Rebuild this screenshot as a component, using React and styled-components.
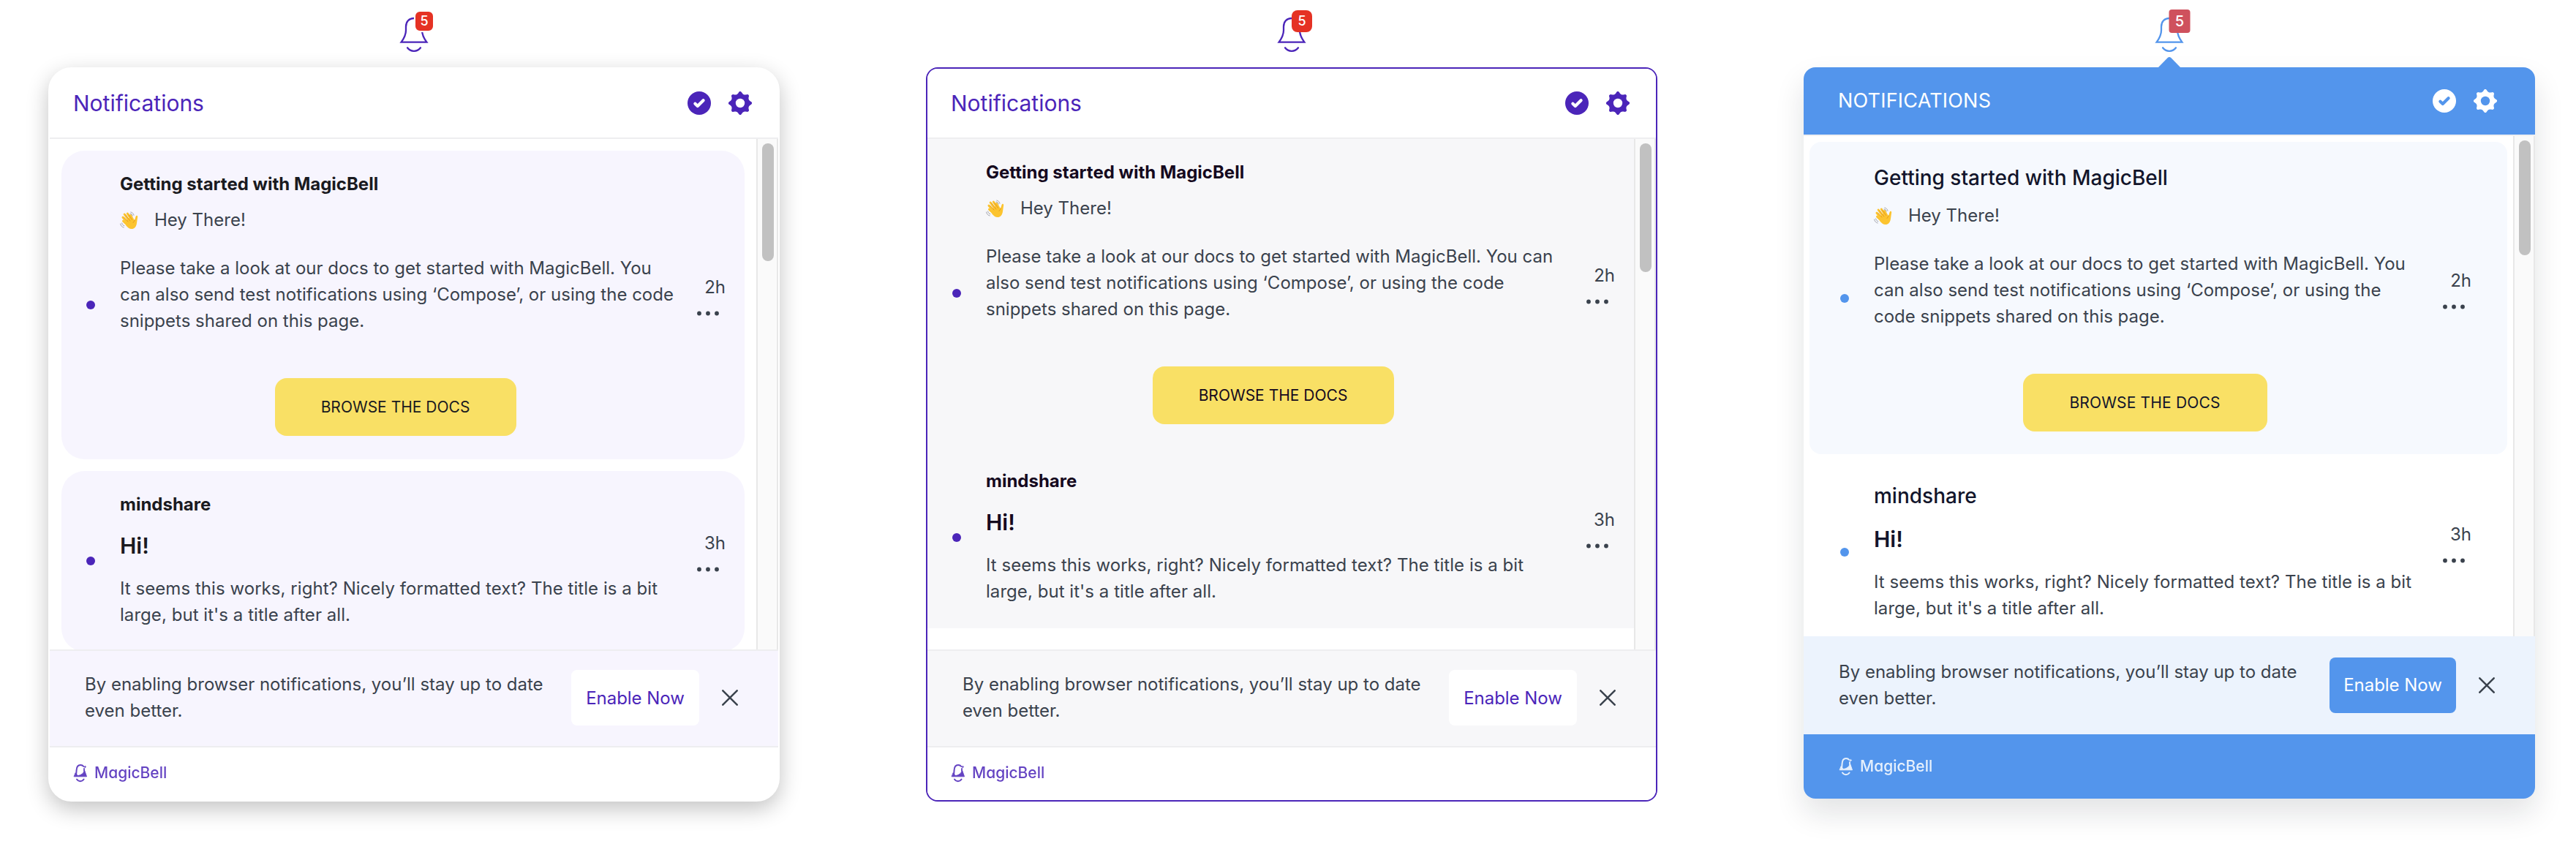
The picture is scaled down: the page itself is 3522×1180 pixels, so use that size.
import React from "react";
import styled, { createGlobalStyle, ThemeProvider, css } from "styled-components";

const GlobalStyle = createGlobalStyle`
  *, *::before, *::after { box-sizing: border-box; }
  body {
    margin: 0;
    background: #ffffff;
    font-family: Inter, "Liberation Sans", sans-serif;
  }
  h2, h3, h4, p { margin: 0; }
  button { font: inherit; border: 0; cursor: pointer; padding: 0; }
`;

const purple = "#4b25b9";
const blue = "#5395ec";

const base = {
  accent: purple,
  text: "#3a424d",
  heading: "#1a1a1f",
  line: "#eeeef0",
  badge: { width: 28, height: 30, radius: 8, font: 18, bg: "#e53224", ring: "0 solid #fff" },
  panel: { border: "2px solid #ffffff", radius: 32, shadow: "none", height: 1004 },
  header: {
    height: 96, bg: "#ffffff", color: purple, size: 30, spacing: "0",
    transform: "none", padding: "0 36px 0 32px",
  },
  list: { height: 698, thumb: 161, margin: 16, inset: 16 },
  card: { bg: "#f7f5fe", unreadBg: "#f7f5fe", radius: 32, padding: "28px 26px 32px 34px", aside: 70 },
  title: { size: 24, line: 36, weight: 700, spacing: "0", gap: 13, richGap: 20 },
  cta: { width: 330, spacing: "0", shift: 5 },
  banner: {
    height: 134, bg: "#f7f5fe", border: "#eeeef0", padding: "0 55px 2px 48px",
    buttonBg: "#ffffff", buttonColor: purple, buttonWidth: 175, gap: 31,
  },
  footer: { bg: "#ffffff", color: purple, padding: "0 32px 2px 32px", opacity: 0.86 },
};

const themes = [
  {
    ...base,
    badge: { ...base.badge, ring: "2px solid #fff" },
    panel: { ...base.panel, shadow: "0 10px 30px rgba(0, 0, 0, 0.24)" },
  },
  {
    ...base,
    heading: "#15091e",
    panel: { ...base.panel, border: `2px solid ${purple}`, radius: 16 },
    list: { height: 698, thumb: 176, margin: 0, inset: 0 },
    card: { ...base.card, bg: "#f7f7f9", unreadBg: "#f7f7f9", radius: 0 },
    banner: { ...base.banner, bg: "#f7f7f9" },
  },
  {
    ...base,
    accent: blue,
    heading: "#12152b",
    arrow: true,
    line: "#f0f0f1",
    badge: { width: 29, height: 32, radius: 4, font: 20, bg: "#cf515d", ring: "0 solid #fff" },
    panel: { border: "0", radius: 16, shadow: "0 20px 40px rgba(15, 25, 35, 0.12)", height: 1000 },
    header: {
      height: 94, bg: blue, color: "#ffffff", size: 27, spacing: "0.2px",
      transform: "uppercase", padding: "0 52px 0 47px",
    },
    list: { height: 684, thumb: 157, margin: 8, inset: 8 },
    card: { bg: "#ffffff", unreadBg: "#f6f9fe", radius: 16, padding: "28px 49px 31px 42px", aside: 74 },
    title: { size: 28, line: 42, weight: 500, spacing: "0", gap: 13, richGap: 20 },
    cta: { width: 334, spacing: "0.16px", shift: 2 },
    banner: {
      height: 134, bg: "#ecf3fd", border: "#ecf3fd", padding: "0 55px 1px 48px",
      buttonBg: blue, buttonColor: "#ffffff", buttonWidth: 173, gap: 31,
    },
    footer: { bg: blue, color: "#ffffff", padding: "0 48px 1px", opacity: 0.86 },
  },
];

const Page = styled.main`
  display: flex;
  align-items: flex-start;
  gap: 200px;
  width: 3522px;
  height: 1180px;
  padding: 0 66px 0;
  overflow: hidden;
`;

const Column = styled.section`
  width: 1000px;
  flex: none;
  color: ${(p) => p.theme.text};
`;

const BellArea = styled.div`
  position: relative;
  display: flex;
  justify-content: center;
  height: 92px;
  padding-top: 23px;
  color: ${(p) => p.theme.accent};
`;

const Badge = styled.span`
  position: absolute;
  left: 514px;
  top: 29px;
  width: ${(p) => p.theme.badge.width}px;
  height: ${(p) => p.theme.badge.height}px;
  transform: translate(-50%, -50%);
  display: flex;
  align-items: center;
  justify-content: center;
  border: ${(p) => p.theme.badge.ring};
  border-radius: ${(p) => p.theme.badge.radius}px;
  background: ${(p) => p.theme.badge.bg};
  color: #ffffff;
  font-size: ${(p) => p.theme.badge.font}px;
  font-weight: 500;
  line-height: 1;
`;

const Arrow = styled.svg`
  position: absolute;
  left: 484px;
  top: 77px;
`;

const Panel = styled.div`
  display: flex;
  flex-direction: column;
  height: ${(p) => p.theme.panel.height}px;
  border: ${(p) => p.theme.panel.border};
  border-radius: ${(p) => p.theme.panel.radius}px;
  box-shadow: ${(p) => p.theme.panel.shadow};
  background: #ffffff;
  overflow: hidden;
`;

const Header = styled.header`
  display: flex;
  align-items: center;
  flex: none;
  gap: 24px;
  height: ${(p) => p.theme.header.height}px;
  padding: ${(p) => p.theme.header.padding};
  border-bottom: 2px solid ${(p) => p.theme.line};
  background: ${(p) => p.theme.header.bg};
  background-clip: padding-box;
  color: ${(p) => p.theme.header.color};
`;

const HeaderTitle = styled.h2`
  flex: 1;
  font-size: ${(p) => p.theme.header.size}px;
  font-weight: 400;
  line-height: 40px;
  letter-spacing: ${(p) => p.theme.header.spacing};
  text-transform: ${(p) => p.theme.header.transform};
`;

const ListArea = styled.div`
  display: flex;
  flex: none;
  height: ${(p) => p.theme.list.height}px;
  overflow: hidden;
`;

const List = styled.div`
  display: flex;
  flex-direction: column;
  flex: 1;
  gap: ${(p) => p.theme.list.margin}px;
  padding: ${(p) => p.theme.list.inset}px;
`;

const Track = styled.div`
  width: 30px;
  padding: 6px;
  background: #fafafa;
  border: solid #e8e8e8;
  border-width: 0 2px;
`;

const Thumb = styled.div`
  width: 16px;
  height: ${(p) => p.theme.list.thumb}px;
  border-radius: 8px;
  background: #c1c1c1;
`;

const Card = styled.article`
  display: flex;
  align-items: center;
  flex: none;
  padding: ${(p) => p.theme.card.padding};
  border-radius: ${(p) => p.theme.card.radius}px;
  background: ${(p) => (p.$highlight ? p.theme.card.unreadBg : p.theme.card.bg)};
`;

const UnreadDot = styled.span`
  flex: none;
  width: 12px;
  height: 12px;
  margin: 3px 34px 0 0;
  border-radius: 50%;
  background: ${(p) => p.theme.accent};
`;

const Body = styled.div`
  flex: 1;
  display: flex;
  flex-direction: column;
`;

const Title = styled.h3`
  color: ${(p) => p.theme.heading};
  font-size: ${(p) => p.theme.title.size}px;
  font-weight: ${(p) => p.theme.title.weight};
  line-height: ${(p) => p.theme.title.line}px;
  margin-bottom: ${(p) => (p.$rich ? p.theme.title.richGap : p.theme.title.gap)}px;
`;

const Greeting = styled.p`
  display: flex;
  align-items: center;
  gap: 22px;
  margin-bottom: 30px;
  font-size: 24px;
  line-height: 36px;
`;

const Paragraph = styled.p`
  font-size: 24px;
  line-height: 36px;
  ${(p) => p.$wide && css`letter-spacing: 0.05px;`}
`;

const Lead = styled.h4`
  margin-bottom: 23px;
  color: ${(p) => p.theme.heading};
  font-size: 30px;
  font-weight: 600;
  line-height: 36px;
`;

const Cta = styled.button`
  align-self: center;
  width: ${(p) => p.theme.cta.width}px;
  height: 79px;
  margin: 60px ${(p) => p.theme.cta.shift}px 0 0;
  border-radius: 16px;
  background: #f9e065;
  color: ${(p) => p.theme.heading};
  font-size: 21px;
  letter-spacing: ${(p) => p.theme.cta.spacing};
`;

const Aside = styled.div`
  display: flex;
  flex-direction: column;
  align-items: flex-end;
  flex: none;
  width: ${(p) => p.theme.card.aside}px;
`;

const Time = styled.time`
  font-size: 24px;
  line-height: 36px;
`;

const More = styled.svg`
  margin: 14px 9px 24px 0;
`;

const Banner = styled.div`
  display: flex;
  align-items: center;
  flex: none;
  height: ${(p) => p.theme.banner.height}px;
  padding: ${(p) => p.theme.banner.padding};
  border: solid ${(p) => p.theme.banner.border};
  border-width: 2px 0;
  background: ${(p) => p.theme.banner.bg};
`;

const BannerText = styled.p`
  flex: 1;
  padding-right: 36px;
  font-size: 24px;
  line-height: 36px;
`;

const EnableButton = styled.button`
  width: ${(p) => p.theme.banner.buttonWidth}px;
  height: 76px;
  margin-right: ${(p) => p.theme.banner.gap}px;
  border-radius: 8px;
  background: ${(p) => p.theme.banner.buttonBg};
  color: ${(p) => p.theme.banner.buttonColor};
  font-size: 24px;
  letter-spacing: -0.05px;
`;

const Footer = styled.footer`
  display: flex;
  align-items: center;
  flex: 1;
  gap: 8px;
  padding: ${(p) => p.theme.footer.padding};
  background: ${(p) => p.theme.footer.bg};
  color: ${(p) => p.theme.footer.color};
`;

const Brand = styled.span`
  font-size: 21px;
  font-weight: 500;
  line-height: 28px;
  font-feature-settings: "cv11", "ss03";
  opacity: ${(p) => p.theme.footer.opacity};
`;

const BrandMark = styled.svg`
  opacity: ${(p) => p.theme.footer.opacity};
`;

function Bell() {
  return (
    <svg width="40" height="50" viewBox="0 0 40 50" fill="none" stroke="currentColor" strokeWidth="2.3" strokeLinecap="round">
      <path d="M20 2C13 2 9 7 9 13.500V18.500C9 25 6 30 2.600 34.700H37.400C34 30 31 25 31 18.500V13.500C31 7 27 2 20 2Z" />
      <path d="M11 42.300C15.500 48.300 24.500 48.300 29 42.300" />
    </svg>
  );
}

function CheckCircle() {
  return (
    <svg width="32" height="32" viewBox="-16 -16 32 32">
      <mask id="check-cut">
        <rect x="-16" y="-16" width="32" height="32" fill="#fff" />
        <path d="M-5.600 0.700L-2.200 4L5.600-3.800" fill="none" stroke="#000" strokeWidth="4.200" strokeLinecap="round" strokeLinejoin="round" />
      </mask>
      <circle r="16" fill="currentColor" mask="url(#check-cut)" />
    </svg>
  );
}

const point = (deg, r) => {
  const a = (deg * Math.PI) / 180;
  return `${(r * Math.cos(a)).toFixed(2)} ${(r * Math.sin(a)).toFixed(2)}`;
};
const teeth = [45, 90, 135, 180, 225, 270, 315, 360];
const gearPath =
  `M${point(0, 13.8)}` +
  teeth.map((d) => `Q${point(d - 22.5, 8.2)} ${point(d, 13.8)}`).join("") +
  "Z";

function Gear() {
  return (
    <svg width="32" height="32" viewBox="-16 -16 32 32">
      <mask id="gear-cut">
        <rect x="-16" y="-16" width="32" height="32" fill="#fff" />
        <circle r="6.2" fill="#000" />
      </mask>
      <path d={gearPath} fill="currentColor" stroke="currentColor" strokeWidth="4.400" strokeLinejoin="round" mask="url(#gear-cut)" />
    </svg>
  );
}

function WavingHand() {
  return (
    <svg width="25" height="25" viewBox="0 0 25 25" fill="none" strokeLinecap="round" strokeLinejoin="round">
      <path d="M8 13L14.500 7.500L20 12L21.800 6.600C22.300 5.200 24.300 5.600 24.200 7.300L23 16C22.300 21.500 19.500 24 16 24C12.500 24 10.800 22.300 8.300 19.200Z" fill="#fcc42f" />
      <g stroke="#fcc42f" strokeWidth="3">
        <path d="M14 15L6.200 4" />
        <path d="M16.500 13L10.300 3" />
        <path d="M12.500 17.500L4 8.200" />
        <path d="M11 19.500L4.500 13.200" />
        <path d="M18.500 13L14.500 5.500" />
      </g>
      <g stroke="#dd8f1c" strokeWidth="0.800">
        <path d="M13.800 13L7.800 4.800" />
        <path d="M16.600 11.500L12 4.500" />
        <path d="M11 14L5.500 8" />
        <path d="M18 15.500C19 14 19.800 13.500 20.300 12" />
      </g>
      <g stroke="#a3a5ad" strokeWidth="1">
        <path d="M14.800 1C17.200 1.500 18.500 3 19 5.200" />
        <path d="M14 3C15.800 3.200 16.800 4.300 17.200 6" />
        <path d="M0.600 17C1.200 20 3 21.500 5.200 22" />
        <path d="M2.600 16C3 18 4.200 19.200 5.800 19.700" />
      </g>
    </svg>
  );
}

function BrandBell() {
  return (
    <BrandMark width="21" height="26" viewBox="0 0 21 26" fill="none" stroke="currentColor" strokeWidth="2" strokeLinecap="round">
      <path d="M4 17L4.600 9C4.800 4.500 7 2 10 2C11.800 2 13.300 2.700 14.300 4" />
      <path d="M1.500 17.800H18.500L15.600 9.500C14.500 13 11 16.300 6 16.500L3.400 13Z" fill="currentColor" strokeWidth="1" strokeLinejoin="round" />
      <path d="M15 7V10" strokeWidth="1.800" />
      <path d="M16.300 2.600L17 4L18.400 4.600L17 5.200L16.300 6.600L15.600 5.200L14.200 4.600L15.600 4Z" fill="currentColor" stroke="none" />
      <path d="M5 21.500C7.400 25 12.200 25 14.600 21.500" />
    </BrandMark>
  );
}

function Dots() {
  return (
    <More width="30" height="7" viewBox="0 0 30 7" fill="currentColor">
      <circle cx="3" cy="3.500" r="2.900" />
      <circle cx="15" cy="3.500" r="2.900" />
      <circle cx="27" cy="3.500" r="2.900" />
    </More>
  );
}

function Close() {
  return (
    <svg width="22" height="22" viewBox="0 0 22 22" stroke="currentColor" strokeWidth="2.500" strokeLinecap="round">
      <path d="M1.300 1.300L20.700 20.700M20.700 1.300L1.300 20.700" />
    </svg>
  );
}

function Notification({ title, time, highlight, rich, children }) {
  return (
    <Card $highlight={highlight}>
      <UnreadDot />
      <Body>
        <Title $rich={rich}>{title}</Title>
        {children}
      </Body>
      <Aside>
        <Time>{time}</Time>
        <Dots />
      </Aside>
    </Card>
  );
}

function Inbox({ theme }) {
  return (
    <ThemeProvider theme={theme}>
      <Column>
        <BellArea>
          <Bell />
          <Badge>5</Badge>
          {theme.arrow && (
            <Arrow width="32" height="15" viewBox="0 0 32 15">
              <path d="M0.500 15.500L13.700 2Q16 0 18.300 2L31.500 15.500Z" fill={theme.accent} />
            </Arrow>
          )}
        </BellArea>
        <Panel>
          <Header>
            <HeaderTitle>Notifications</HeaderTitle>
            <CheckCircle />
            <Gear />
          </Header>
          <ListArea>
            <List>
              <Notification title="Getting started with MagicBell" time="2h" highlight>
                <Greeting>
                  <WavingHand />
                  Hey There!
                </Greeting>
                <Paragraph>
                  Please take a look at our docs to get started with MagicBell. You can also send test
                  notifications using ‘Compose’, or using the code snippets shared on this page.
                </Paragraph>
                <Cta>BROWSE THE DOCS</Cta>
              </Notification>
              <Notification title="mindshare" time="3h" rich>
                <Lead>Hi!</Lead>
                <Paragraph $wide>
                  It seems this works, right? Nicely formatted text? The title is a bit large, but it's a
                  title after all.
                </Paragraph>
              </Notification>
            </List>
            <Track>
              <Thumb />
            </Track>
          </ListArea>
          <Banner>
            <BannerText>By enabling browser notifications, you’ll stay up to date even better.</BannerText>
            <EnableButton>Enable Now</EnableButton>
            <Close />
          </Banner>
          <Footer>
            <BrandBell />
            <Brand>MagicBell</Brand>
          </Footer>
        </Panel>
      </Column>
    </ThemeProvider>
  );
}

export default function App() {
  return (
    <>
      <GlobalStyle />
      <Page>
        {themes.map((theme, index) => (
          <Inbox key={index} theme={theme} />
        ))}
      </Page>
    </>
  );
}
